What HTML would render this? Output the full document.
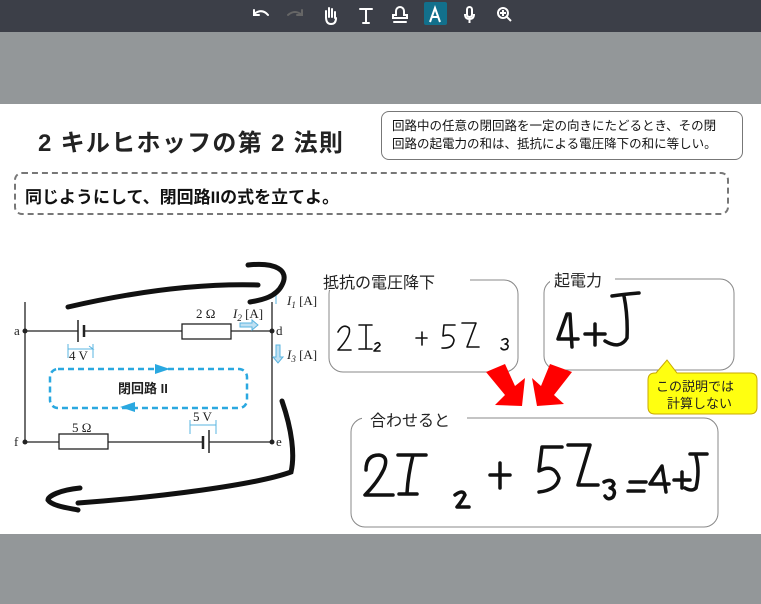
<!DOCTYPE html>
<html><head><meta charset="utf-8"><style>
body{margin:0;width:761px;height:604px;overflow:hidden;background:#939799;font-family:"Liberation Sans","Noto Sans CJK JP",sans-serif;position:relative}
.tb{position:absolute;left:0;top:0;width:761px;height:32px;background:#3c3f48}
.slide{position:absolute;left:0;top:104px;width:761px;height:430px;background:#fff}
.abs{position:absolute}
</style></head><body>
<div class="tb">
<svg width="761" height="32" style="position:absolute;left:0;top:0">
<g fill="none" stroke="#fff" stroke-width="2" stroke-linecap="round">
<path d="M254 14 q8-6 14 1"/><path d="M254 10v5h5"/>
<path d="M302 15 q-7-6-14 0" stroke="#666"/><path d="M302 10v5h-5" stroke="#666"/>
<path d="M326 18v-7M329 17v-9M332 17v-8M335 18v-6M326 17q0 7 5 7q5 0 5-6"/>
<path d="M360 9h12M366 9v14M363 23h6"/>
<path d="M396 11a4 4 0 1 1 8 0v4h3v3h-14v-3h3zM394 22h12"/>
</g>
<rect x="424" y="2" width="23" height="23" rx="2" fill="#12708c"/>
<path d="M430 22l5-14 5 14M432 17h6" stroke="#fff" stroke-width="2" fill="none"/>
<g fill="none" stroke="#fff" stroke-width="2"><rect x="467" y="7" width="5" height="10" rx="2.5"/><path d="M465 14q0 5 4.5 5t4.5-5M469.5 19v4"/>
<circle cx="503" cy="13" r="5"/><path d="M507 17l4 4M503 10v6M500 13h6"/></g>
</svg></div>
<div class="slide"></div>
<div class="abs" style="left:38px;top:123px;font-size:24px;font-weight:bold;color:#222;letter-spacing:1.3px">2 キルヒホッフの第 2 法則</div>
<div class="abs" style="left:381px;top:111px;width:362px;height:49px;border:1px solid #777;border-radius:8px;box-sizing:border-box;font-size:12.5px;line-height:18px;padding:5px 0 0 10px;color:#111">回路中の任意の閉回路を一定の向きにたどるとき、その閉<br>回路の起電力の和は、抵抗による電圧降下の和に等しい。</div>
<div class="abs" style="left:14px;top:172px;width:715px;height:43px;border:2px dashed #777;border-radius:8px;box-sizing:border-box;font-size:17px;font-weight:bold;padding:9px 0 0 9px;color:#111">同じようにして、閉回路IIの式を立てよ。</div>

<svg class="abs" style="left:0;top:0" width="761" height="604">
<g stroke="#222" stroke-width="1.3" fill="none">
<path d="M25 302V442M272 302V442M25 331H78M84 331H182M231 331H272M25 442H59M108 442H203M209 442H272"/>
<path d="M78 320V342" stroke-width="1.5"/><path d="M84 325V337" stroke-width="2.5"/>
<rect x="182" y="324" width="49" height="15" fill="#fff"/>
<rect x="59" y="434" width="49" height="15" fill="#fff"/>
<path d="M203 436V449" stroke-width="2.5"/><path d="M209 430V453" stroke-width="1.5"/>
</g>
<g fill="#222"><circle cx="25" cy="331" r="2.5"/><circle cx="272" cy="331" r="2.5"/><circle cx="25" cy="442" r="2.5"/><circle cx="272" cy="442" r="2.5"/></g>
<g font-family="Liberation Serif,serif" font-size="13" fill="#222">
<text x="14" y="335">a</text><text x="276" y="335">d</text><text x="14" y="446">f</text><text x="276" y="446">e</text>
<text x="196" y="318">2 Ω</text><text x="72" y="432">5 Ω</text><text x="69" y="360">4 V</text><text x="193" y="421">5 V</text>
<text x="233" y="318" font-style="italic">I<tspan font-size="9" dy="3">2</tspan><tspan dy="-3" font-style="normal"> [A]</tspan></text>
<text x="287" y="359" font-style="italic">I<tspan font-size="9" dy="3">3</tspan><tspan dy="-3" font-style="normal"> [A]</tspan></text>
<text x="287" y="305" font-style="italic">I<tspan font-size="9" dy="3">1</tspan><tspan dy="-3" font-style="normal"> [A]</tspan></text>
</g>
<g stroke="#5ab4e0" fill="#bfe0f2">
<path d="M240 323h12v-3l6 5-6 5v-3h-12z"/>
<path d="M276 345v12h-3l5 6 5-6h-3v-12z"/><path d="M276 292v12"/>
</g>
<g stroke="#5ab4e0" stroke-width="1" fill="none"><path d="M68 344v14M93 344v14M68 349h25l-4-3"/><path d="M190 420v14M216 420v14M190 425h26"/></g>
<rect x="50" y="369" width="197" height="39" rx="8" fill="none" stroke="#2aa8e0" stroke-width="2.5" stroke-dasharray="6 4"/>
<path d="M155 364l15 5-15 5z M135 402l-15 5 15 5z" fill="#2aa8e0"/>
<text x="118" y="393" font-size="13" font-weight="bold" fill="#222">閉回路 II</text>
<g stroke="#111" stroke-width="5" fill="none" stroke-linecap="round">
<path d="M68 307C120 295 190 283 258 285"/>
<path d="M248 265C275 262 290 270 282 285C276 297 262 300 250 302"/>
<path d="M282 401C292 430 295 455 291 472C255 485 160 497 78 503"/>
<path d="M80 488C60 490 48 496 48 500C52 506 68 508 78 510"/>
</g>
<g fill="none" stroke="#888" stroke-width="1">
<rect x="329" y="280" width="189" height="92" rx="14"/>
<rect x="544" y="279" width="190" height="91" rx="14"/>
<rect x="351" y="418" width="367" height="109" rx="14"/>
</g>
<rect x="320" y="270" width="150" height="20" fill="#fff"/>
<rect x="550" y="268" width="65" height="22" fill="#fff"/>
<rect x="362" y="408" width="105" height="20" fill="#fff"/>
<g font-size="16" fill="#222">
<text x="323" y="288">抵抗の電圧降下</text><text x="554" y="286">起電力</text><text x="370" y="426">合わせると</text>
</g>
<path d="M656 373l11-13 10 13h73q7 0 7 7v27q0 7-7 7h-95q-7 0-7-7v-27q0-7 7-7z" fill="#ffff10" stroke="#c8a800"/>
<text x="656" y="391" font-size="13" fill="#222">この説明では</text>
<text x="667" y="408" font-size="13" fill="#222">計算しない</text>
<path d="M486 372L505 364L515 386L525 378L522 406L495 405L505 395Z" fill="#f00"/>
<path d="M550 364L572 372L554 395L564 404L537 406L532 378L541 386Z" fill="#f00"/>
<g stroke="#111" stroke-width="1.6" fill="none" stroke-linecap="round" stroke-linejoin="round">
<path d="M338 332q5-9 11-4q3 7-11 22h13"/><path d="M359 325h13M366 325v23M359 349h13"/><path d="M375 344q4-3 5 1l-6 6h6"/>
<path d="M422 332v13M416 338h11"/><path d="M455 325h-11l-1 11q9-3 11 4q-1 9-12 8"/><path d="M462 323h14l-9 24h12"/><path d="M502 340q5-3 6 1q-1 3-3 3q5 1 2 5q-4 2-6-1"/>
</g>
<g stroke="#111" stroke-width="3.5" fill="none" stroke-linecap="round" stroke-linejoin="round">
<path d="M572 347l-2-33l-3 0l-9 25h20"/><path d="M585 334h20M595 324v21"/>
<path d="M612 296q15-2 27-3M624 296q4 20 3 42q-7 12-22 3"/>
<path d="M366 470q0-15 13-15q10 1 5 14q-6 13-19 26h28"/><path d="M398 455h28M413 455q-5 20-6 38M399 494h18"/>
<path d="M455 495q8-6 10 0q-3 6-8 12h12"/>
<path d="M500 463v25M490 475h20"/><path d="M562 447h-20l-3 24q15-8 20 7q-2 12-20 14"/><path d="M568 445h22l-12 40h20"/>
<path d="M604 482q8-4 10 2q-2 4-4 4q7 2 3 9q-5 4-8-1"/><path d="M630 482h16M628 491h16"/><path d="M666 492l-4-26l-12 18h19"/><path d="M674 480h16M682 472v16"/><path d="M690 454h17M696 456q4 15 0 32q-4 4-11 0"/>
</g>
</svg>
</body></html>
